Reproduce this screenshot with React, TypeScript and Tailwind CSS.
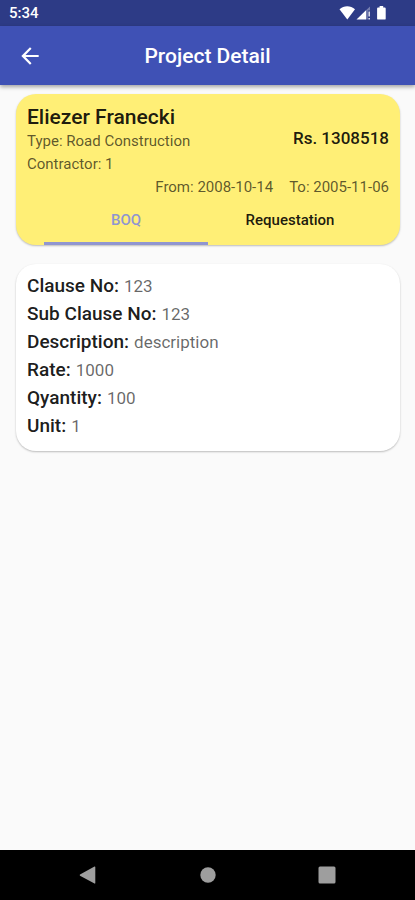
import * as React from "react"
import clsx from "clsx"

interface Field {
  label: string
  value: string
}

const fields: Field[] = [
  { label: "Clause No", value: "123" },
  { label: "Sub Clause No", value: "123" },
  { label: "Description", value: "description" },
  { label: "Rate", value: "1000" },
  { label: "Qyantity", value: "100" },
  { label: "Unit", value: "1" },
]

const tabs = ["BOQ", "Requestation"]

function StatusBar() {
  return (
    <div className="flex h-[26px] items-center justify-between bg-[#2d3b86] pl-[9px] pr-7 text-white">
      <span className="text-[15px] font-medium leading-[26px]">5:34</span>
      <svg className="h-4 w-12" viewBox="0 0 48 16" fill="currentColor" aria-hidden="true">
        {/* wifi */}
        <path d="M0.5 4.2C4.8 0.2 11.6 0.2 16 4.2L8.3 14.6z" />
        {/* signal */}
        <path d="M17.5 14.6L27 5.2v9.4z" />
        <path d="M27 5.2L31 1.5v4h-2.2v9.1H27z" opacity="0.35" />
        <path d="M29.4 6.6h1.6v5h-1.6zM29.4 12.9h1.6v1.7h-1.6z" opacity="0.8" />
        {/* battery */}
        <path d="M40.6 1h3.6v1.6h1.6c.5 0 .9.4.9.9v10.2c0 .5-.4.9-.9.9h-6.8c-.5 0-.9-.4-.9-.9V3.5c0-.5.4-.9.9-.9h1.6z" />
      </svg>
    </div>
  )
}

function AppBar() {
  return (
    <header className="relative z-10 grid h-[59px] grid-cols-[60px_1fr_60px] items-center bg-[#3f51b5] text-white shadow-[0_2px_4px_rgba(0,0,0,0.35)]">
      <button type="button" aria-label="Back" className="flex h-full items-center justify-center">
        <svg className="size-[26px]" viewBox="0 0 24 24" fill="currentColor" aria-hidden="true">
          <path d="M20 11H7.83l5.59-5.59L12 4l-8 8 8 8 1.41-1.41L7.83 13H20v-2z" />
        </svg>
      </button>
      <h1 className="text-center text-[21px] font-medium leading-7">Project Detail</h1>
    </header>
  )
}

function ProjectCard({ active, onChange }: { active: number; onChange: (index: number) => void }) {
  return (
    <section className="overflow-hidden rounded-[20px] bg-[#ffef76] shadow-[0_1px_2px_rgba(0,0,0,0.25)]">
      <div className="px-[11px] pt-[11px] text-[15px] leading-[23px] text-black/65">
        <div className="flex items-center justify-between">
          <div>
            <h2 className="text-[21px] font-medium leading-[25px] text-black/90">Eliezer Franecki</h2>
            <p>Type: Road Construction</p>
            <p>Contractor: 1</p>
          </div>
          <p className="pb-1 text-[17px] font-medium text-black/90">Rs. 1308518</p>
        </div>
        <div className="flex justify-end gap-4">
          <span>From: 2008-10-14</span>
          <span>To: 2005-11-06</span>
        </div>
      </div>
      <div role="tablist" className="flex px-7">
        {tabs.map((tab, index) => (
          <button
            key={tab}
            type="button"
            role="tab"
            aria-selected={active === index}
            onClick={() => onChange(index)}
            className={clsx(
              "h-[46px] flex-1 border-b-[3px] pb-0.5 text-[15px] font-medium leading-5",
              active === index ? "border-[#9096d0] text-[#9096d0]" : "border-transparent text-black/90"
            )}
          >
            {tab}
          </button>
        ))}
      </div>
    </section>
  )
}

function BoqCard() {
  return (
    <section className="rounded-[20px] bg-white px-[11px] pb-[11px] pt-2 shadow-[0_1px_2px_rgba(0,0,0,0.25)]">
      <dl className="text-[17px] leading-7">
        {fields.map((field) => (
          <div key={field.label} className="flex items-baseline gap-[5px]">
            <dt className="text-[19px] font-medium text-black/90">{field.label}:</dt>
            <dd className="text-black/60">{field.value}</dd>
          </div>
        ))}
      </dl>
    </section>
  )
}

function NavigationBar() {
  return (
    <nav className="flex h-[50px] items-center justify-between bg-black px-[76px] text-[#9e9e9e]">
      <button type="button" aria-label="Back">
        <svg className="size-6" viewBox="0 0 24 24" fill="currentColor" aria-hidden="true">
          <path d="M18.5 3.6c.4-.2.8 0 .8.5v16c0 .5-.4.7-.8.5L4 12.7c-.4-.3-.4-.9 0-1.100z" />
        </svg>
      </button>
      <button type="button" aria-label="Home">
        <svg className="size-6" viewBox="0 0 24 24" fill="currentColor" aria-hidden="true">
          <circle cx="12" cy="12" r="7.7" />
        </svg>
      </button>
      <button type="button" aria-label="Recents">
        <svg className="size-6" viewBox="0 0 24 24" fill="currentColor" aria-hidden="true">
          <rect x="3.5" y="3.5" width="17" height="17" rx="1.5" />
        </svg>
      </button>
    </nav>
  )
}

export default function App() {
  const [active, setActive] = React.useState(0)

  return (
    <div className="flex min-h-screen flex-col bg-[#fafafa] font-[Roboto,sans-serif]">
      <StatusBar />
      <AppBar />
      <main className="flex flex-1 flex-col gap-[19px] pb-5 pl-4 pr-[15px] pt-[9px]">
        <ProjectCard active={active} onChange={setActive} />
        {active === 0 && <BoqCard />}
      </main>
      <NavigationBar />
    </div>
  )
}
